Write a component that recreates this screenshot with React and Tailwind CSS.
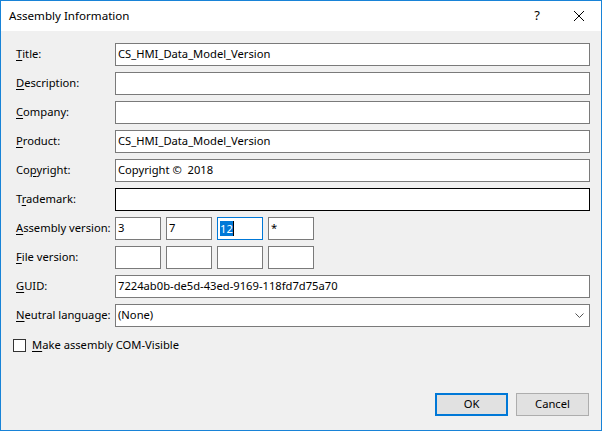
import React from "react";

// Underlines the access-key letter of a WinForms-style label
function Key({ text, k }) {
    return (
        <span>
            {text.slice(0, k)}
            <span className="underline underline-offset-2">{text[k]}</span>
            {text.slice(k + 1)}
        </span>
    );
}

function TextBox({ value = "", dark = false }) {
    return (
        <div
            className={`flex-1 h-[23px] bg-white border flex items-center pl-[2px] ${
                dark ? "border-[#000000]" : "border-[#7a7a7a]"
            }`}
        >
            {value}
        </div>
    );
}

function Row({ label, k, children }) {
    return (
        <div className="flex items-center h-[23px]">
            <div className="w-[99px] shrink-0 whitespace-nowrap">
                <Key text={label} k={k} />
            </div>
            {children}
        </div>
    );
}

function VersionBox({ value = "", focused = false, selected = false }) {
    return (
        <div
            className={`w-[46px] h-[23px] bg-white border flex items-center pl-[2px] ${
                focused ? "border-[#0078d7]" : "border-[#7a7a7a]"
            }`}
        >
            {selected ? (
                <>
                    <span className="bg-[#0078d7] text-white leading-[15px]">{value}</span>
                    <span className="w-px h-[15px] bg-black" />
                </>
            ) : (
                value
            )}
        </div>
    );
}

export default function App() {
    return (
        <div
            className="w-[602px] h-[431px] border border-[#1883d7] bg-[#f0f0f0] flex flex-col text-[11.2px] text-black"
            style={{ fontFamily: '"Noto Sans", "Liberation Sans", sans-serif' }}
        >
            {/* Title bar */}
            <div className="h-[30px] bg-white flex items-center shrink-0 text-[11.6px]">
                <span className="pl-[8px] flex-1">Assembly Information</span>
                <span className="w-[12px] text-center mr-[30px] text-[13px]">?</span>
                <svg width="12" height="12" viewBox="0 0 12 12" className="mr-[16px]">
                    <path d="M1 1 L11 11 M11 1 L1 11" stroke="#000" strokeWidth="1" />
                </svg>
            </div>

            {/* Body */}
            <div className="flex-1 flex flex-col pl-[15px] pr-[11px] pt-[12px]">
                <div className="flex flex-col gap-[6px]">
                    <Row label="Title:" k={0}>
                        <TextBox value="CS_HMI_Data_Model_Version" />
                    </Row>
                    <Row label="Description:" k={0}>
                        <TextBox />
                    </Row>
                    <Row label="Company:" k={0}>
                        <TextBox />
                    </Row>
                    <Row label="Product:" k={0}>
                        <TextBox value="CS_HMI_Data_Model_Version" />
                    </Row>
                    <Row label="Copyright:" k={2}>
                        <TextBox value={"Copyright \u00a9\u00a0 2018"} />
                    </Row>
                    <Row label="Trademark:" k={1}>
                        <TextBox dark />
                    </Row>
                    <Row label="Assembly version:" k={0}>
                        <div className="flex gap-[5px]">
                            <VersionBox value="3" />
                            <VersionBox value="7" />
                            <VersionBox value="12" focused selected />
                            <VersionBox value="*" />
                        </div>
                    </Row>
                    <Row label="File version:" k={0}>
                        <div className="flex gap-[5px]">
                            <VersionBox />
                            <VersionBox />
                            <VersionBox />
                            <VersionBox />
                        </div>
                    </Row>
                    <Row label="GUID:" k={0}>
                        <TextBox value="7224ab0b-de5d-43ed-9169-118fd7d75a70" />
                    </Row>
                    <Row label="Neutral language:" k={0}>
                        <div className="flex-1 h-[23px] bg-white border border-[#7a7a7a] flex items-center pl-[2px] pr-[5px]">
                            <span className="flex-1">(None)</span>
                            <svg width="9" height="5" viewBox="0 0 9 5">
                                <path d="M0.5 0.5 L4.5 4.5 L8.5 0.5" stroke="#555" fill="none" strokeWidth="1" />
                            </svg>
                        </div>
                    </Row>
                </div>

                {/* COM-visible checkbox */}
                <div className="flex items-center mt-[12px] -ml-[3px] h-[13px]">
                    <div className="w-[13px] h-[13px] bg-white border border-[#333333]" />
                    <span className="ml-[6px]">
                        <Key text="Make assembly COM-Visible" k={0} />
                    </span>
                </div>

                {/* Buttons */}
                <div className="mt-auto mb-[14px] flex justify-end gap-[8px] pr-[1px]">
                    <button className="w-[73px] h-[23px] bg-[#e1e1e1] border-2 border-[#0078d7]">OK</button>
                    <button className="w-[73px] h-[23px] bg-[#e1e1e1] border border-[#adadad]">Cancel</button>
                </div>
            </div>
        </div>
    );
}
